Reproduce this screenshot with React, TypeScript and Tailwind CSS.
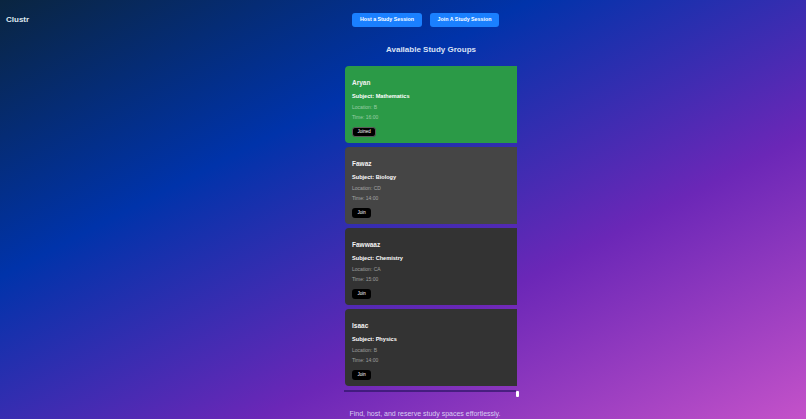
import React from "react";

type Group = { name: string; subject: string; location: string; time: string; joined?: boolean; bg: string };

const groups: Group[] = [
  { name: "Aryan", subject: "Mathematics", location: "B", time: "16:00", joined: true, bg: "bg-[#2b9a47]" },
  { name: "Fawaz", subject: "Biology", location: "CD", time: "14:00", bg: "bg-[#454545]" },
  { name: "Fawwaaz", subject: "Chemistry", location: "CA", time: "15:00", bg: "bg-[#333333]" },
  { name: "Isaac", subject: "Physics", location: "B", time: "14:00", bg: "bg-[#333333]" },
];

function Card({ g }: { g: Group }) {
  return (
    <div className={`${g.bg} h-[77px] rounded-l-[4px] pl-[7px] pt-[13px] flex flex-col items-start`}>
      <div className="text-[6.5px] leading-[8px] font-bold text-[#f2f2f2]">{g.name}</div>
      <div className="mt-[5.5px] text-[5.6px] leading-[7px] font-bold text-white">Subject: {g.subject}</div>
      <div className="mt-[4px] text-[5px] leading-[6px] text-white/50">Location: {g.location}</div>
      <div className="mt-[4px] text-[5px] leading-[6px] text-white/50">Time: {g.time}</div>
      {g.joined ? (
        <button className="mt-[7px] h-[10.6px] px-[4.5px] rounded-[3px] bg-black border border-[#5a5a5a] text-[4.5px] leading-none text-white">
          Joined
        </button>
      ) : (
        <button className="mt-[7px] h-[10.6px] px-[5.5px] rounded-[3px] bg-black text-[4.5px] leading-none text-white">
          Join
        </button>
      )}
    </div>
  );
}

export default function App() {
  return (
    <div className="h-[419px] w-full flex overflow-hidden font-['Liberation_Sans',Arial,sans-serif] bg-[linear-gradient(to_bottom_right,#0a2540_0%,#0033aa_33%,#6b27b7_66%,#c452c9_100%)]">
      <aside className="w-[56px] shrink-0 pl-[6px] pt-[15px]">
        <div className="text-[8px] leading-[10px] font-bold text-[#dfe6f0]">Clustr</div>
      </aside>
      <main className="flex-1 flex flex-col items-center">
        <div className="mt-[13px] flex gap-[8px] pr-[11px]">
          <button className="h-[14px] w-[70px] rounded-[3px] bg-[#1a80ff] text-[5.3px] font-bold text-white leading-none">
            Host a Study Session
          </button>
          <button className="h-[14px] w-[69px] rounded-[3px] bg-[#1a80ff] text-[5.3px] font-bold text-white leading-none">
            Join A Study Session
          </button>
        </div>
        <h2 className="mt-[18px] text-[8px] leading-[10px] font-bold text-[#dae2f5]">Available Study Groups</h2>
        <div className="mt-[11px] w-[172px] flex flex-col gap-[4px]">
          {groups.map((g) => (
            <Card key={g.name} g={g} />
          ))}
        </div>
        <div className="mt-[4px] w-[175px] flex items-start">
          <div className="flex-1 h-[2px] bg-[#2e1566]/70" />
          <div className="w-[3px] h-[6px] mt-[1px] bg-white rounded-[1px]" />
        </div>
        <p className="mt-[11.5px] mr-[12px] text-[7px] leading-[9px] text-[#d9cdf2]">
          Find, host, and reserve study spaces effortlessly.
        </p>
      </main>
    </div>
  );
}
